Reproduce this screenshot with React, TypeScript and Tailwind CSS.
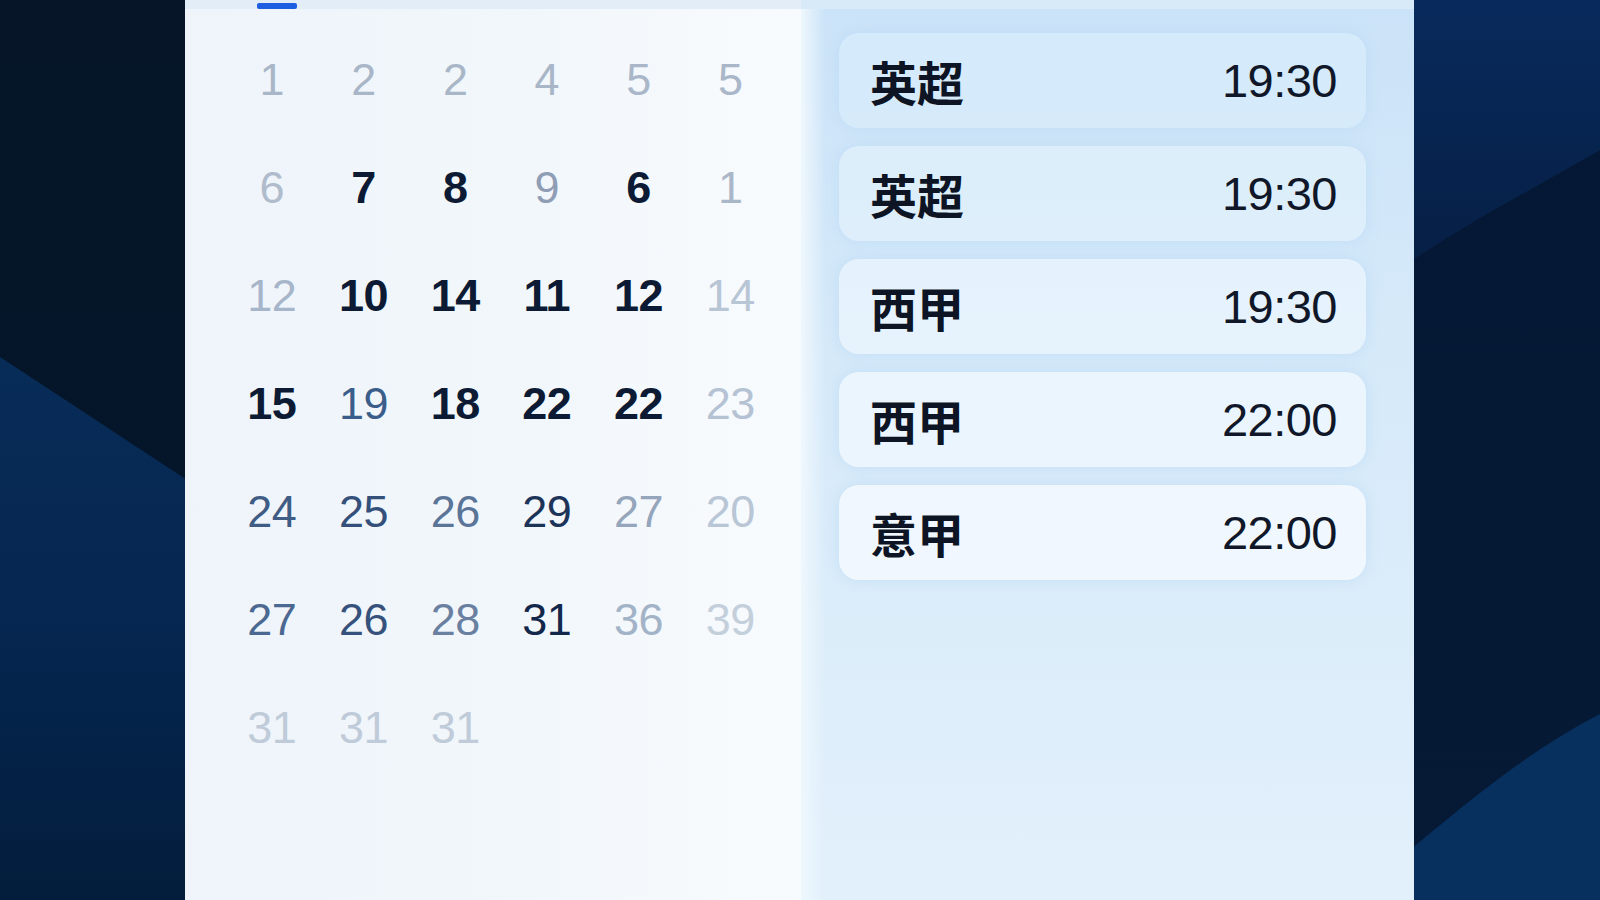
const DARK = 'text-[#0c1a33] font-bold';

type Cell = { n: number; c: string };

const rows: Cell[][] = [
  [
    { n: 1, c: 'text-[#a9b6c8]' },
    { n: 2, c: 'text-[#a9b6c8]' },
    { n: 2, c: 'text-[#a9b6c8]' },
    { n: 4, c: 'text-[#a9b6c8]' },
    { n: 5, c: 'text-[#aab7c9]' },
    { n: 5, c: 'text-[#aab7c9]' },
  ],
  [
    { n: 6, c: 'text-[#b0bccc]' },
    { n: 7, c: DARK },
    { n: 8, c: DARK },
    { n: 9, c: 'text-[#8f9eb5]' },
    { n: 6, c: DARK },
    { n: 1, c: 'text-[#aab7c8]' },
  ],
  [
    { n: 12, c: 'text-[#a6b5c9]' },
    { n: 10, c: DARK },
    { n: 14, c: DARK },
    { n: 11, c: DARK },
    { n: 12, c: DARK },
    { n: 14, c: 'text-[#b8c5d5]' },
  ],
  [
    { n: 15, c: DARK },
    { n: 19, c: 'text-[#3b5d8a]' },
    { n: 18, c: DARK },
    { n: 22, c: DARK },
    { n: 22, c: DARK },
    { n: 23, c: 'text-[#b4c2d3]' },
  ],
  [
    { n: 24, c: 'text-[#3f5c85]' },
    { n: 25, c: 'text-[#34507a]' },
    { n: 26, c: 'text-[#5b7598]' },
    { n: 29, c: 'text-[#1d3459]' },
    { n: 27, c: 'text-[#95a5bb]' },
    { n: 20, c: 'text-[#b9c6d6]' },
  ],
  [
    { n: 27, c: 'text-[#4b6891]' },
    { n: 26, c: 'text-[#36527c]' },
    { n: 28, c: 'text-[#6a80a0]' },
    { n: 31, c: 'text-[#13274a]' },
    { n: 36, c: 'text-[#a3b3c7]' },
    { n: 39, c: 'text-[#c4cfdc]' },
  ],
  [
    { n: 31, c: 'text-[#c0cbd9]' },
    { n: 31, c: 'text-[#c0cbd9]' },
    { n: 31, c: 'text-[#c0cbd9]' },
  ],
];

const matches = [
  { league: '英超', time: '19:30', bg: 'bg-[#d9ecfb]/70' },
  { league: '英超', time: '19:30', bg: 'bg-[#e3f1fc]/70' },
  { league: '西甲', time: '19:30', bg: 'bg-[#ebf5fd]/75' },
  { league: '西甲', time: '22:00', bg: 'bg-[#f0f8fe]/80' },
  { league: '意甲', time: '22:00', bg: 'bg-[#f3f9fe]/85' },
];

function Wallpaper() {
  return (
    <svg className="absolute inset-0" width="1600" height="900" viewBox="0 0 1600 900">
      <defs>
        <linearGradient id="lt" x1="0" y1="0" x2="0" y2="1">
          <stop offset="0" stopColor="#061628" />
          <stop offset="1" stopColor="#04152b" />
        </linearGradient>
        <linearGradient id="lb" x1="0" y1="0" x2="0" y2="1">
          <stop offset="0" stopColor="#082c58" />
          <stop offset="0.5" stopColor="#052650" />
          <stop offset="1" stopColor="#031d3c" />
        </linearGradient>
        <linearGradient id="rt" x1="0" y1="0" x2="0" y2="1">
          <stop offset="0" stopColor="#082a5c" />
          <stop offset="1" stopColor="#061f45" />
        </linearGradient>
        <linearGradient id="rb" x1="0" y1="0" x2="0" y2="1">
          <stop offset="0" stopColor="#041835" />
          <stop offset="1" stopColor="#061a36" />
        </linearGradient>
      </defs>
      <rect x="0" y="0" width="1600" height="900" fill="url(#lt)" />
      <polygon points="0,357 190,482 190,900 0,900" fill="url(#lb)" />
      <rect x="1410" y="0" width="190" height="900" fill="url(#rb)" />
      <path d="M1410 0 H1600 V150 C1540 185 1480 215 1410 262 Z" fill="url(#rt)" />
      <path d="M1410 850 C1470 800 1530 750 1600 714 V900 H1410 Z" fill="#07305f" />
    </svg>
  );
}

export default function App() {
  return (
    <div className="relative w-[1600px] h-[900px] overflow-hidden bg-[#041630] font-['Liberation_Sans',Arial,sans-serif]">
      <Wallpaper />
      <div className="relative ml-[185px] w-[1229px] h-full flex flex-col">
        <div className="flex h-[9px] shrink-0">
          <div className="w-[616px] bg-[#e3edf8] flex items-end">
            <div className="ml-[72px] w-[40px] h-[6px] rounded-[2px] bg-[#1d5fe0]" />
          </div>
          <div className="flex-1 bg-[#d8e9f8]" />
        </div>
        <div className="flex flex-1 min-h-0">
          <div className="w-[616px] bg-[linear-gradient(90deg,#eef4fa_0%,#f2f7fb_60%,#f8fbfe_100%)] pt-[16px] pl-[41px]">
            <div className="grid grid-cols-6 w-[550px]">
              {rows.map((row, ri) =>
                row.map((cell, ci) => (
                  <div
                    key={`${ri}-${ci}`}
                    className={`h-[108px] flex items-center justify-center text-[45px] leading-none tracking-[-0.5px] ${cell.c}`}
                  >
                    {cell.n}
                  </div>
                ))
              )}
            </div>
          </div>
          <div className="relative flex-1 bg-[linear-gradient(180deg,#cbe3f8_0%,#d5e9f9_35%,#dcedfa_70%,#e2f0fb_100%)]">
            <div className="absolute inset-y-0 left-0 w-[24px] bg-[linear-gradient(90deg,#eef7fd,rgba(238,247,253,0))]" />
            <div className="relative flex flex-col gap-[18px] pt-[24px] pl-[38px] pr-[48px]">
              {matches.map((m, i) => (
                <div
                  key={i}
                  className={`h-[95px] rounded-[20px] ${m.bg} shadow-[0_0_14px_rgba(180,215,245,0.6)] flex items-center justify-between pl-[31px] pr-[29px]`}
                >
                  <span className="text-[47px] leading-none font-semibold text-[#0d1424] font-['Noto_Sans_CJK_SC','Noto_Sans',sans-serif]">
                    {m.league}
                  </span>
                  <span className="text-[47px] leading-none text-[#0f1729] tracking-[-0.5px]">{m.time}</span>
                </div>
              ))}
            </div>
          </div>
        </div>
      </div>
    </div>
  );
}
